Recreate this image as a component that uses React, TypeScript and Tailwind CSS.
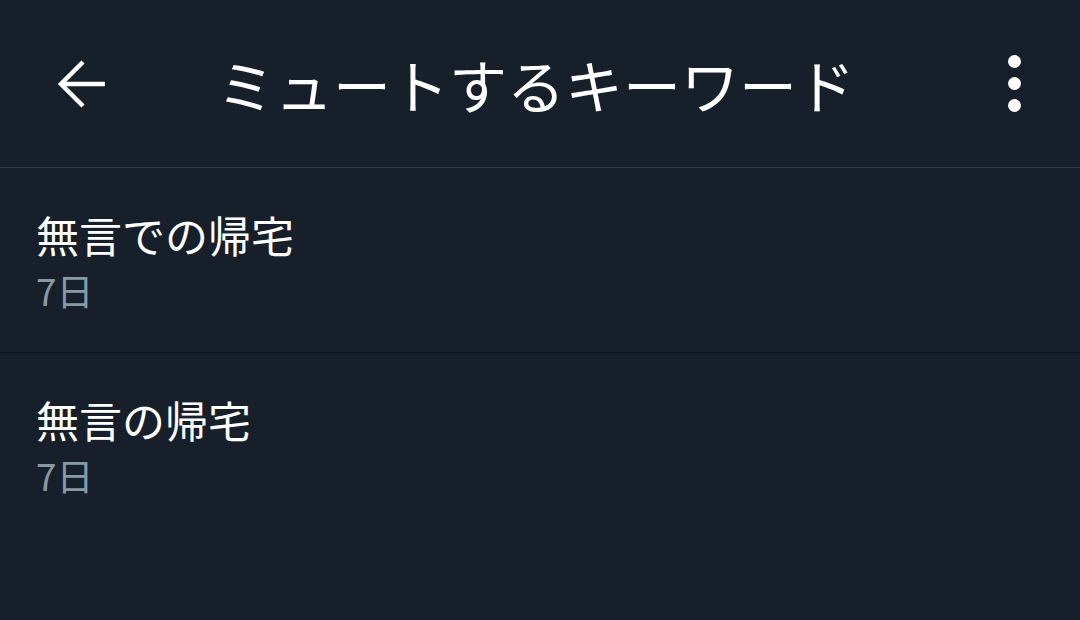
const keywords = [
  { word: "無言での帰宅", duration: "7日" },
  { word: "無言の帰宅", duration: "7日" },
];

function BackArrow() {
  return (
    <svg width="52" height="52" viewBox="0 0 52 52" fill="none" stroke="white" strokeWidth="4.5">
      <path d="M4 26 H48" />
      <path d="M26 4 L4 26 L26 48" strokeLinejoin="miter" />
    </svg>
  );
}

function MoreDots() {
  return (
    <div className="flex flex-col items-center gap-[9px]">
      <span className="h-[13px] w-[13px] rounded-full bg-white" />
      <span className="h-[13px] w-[13px] rounded-full bg-white" />
      <span className="h-[13px] w-[13px] rounded-full bg-white" />
    </div>
  );
}

export default function App() {
  return (
    <div
      className="h-[620px] w-[1080px] overflow-hidden bg-[#17202a] text-white"
      style={{ fontFamily: '"Noto Sans CJK JP", "Noto Sans", sans-serif' }}
    >
      <header className="flex h-[168px] items-center border-b border-[#2f3a44] pl-[57px] pr-[59px]">
        <BackArrow />
        <h1 className="ml-[108px] flex-1 text-[58px] leading-none">
          ミュートするキーワード
        </h1>
        <MoreDots />
      </header>
      <ul>
        {keywords.map((k, i) => (
          <li
            key={k.word}
            className={
              i < keywords.length - 1
                ? "h-[185px] border-b border-[#0f161d] pl-[36px] pt-[37px]"
                : "h-[185px] pl-[36px] pt-[37px]"
            }
          >
            <div className="text-[43px] leading-[58px]">{k.word}</div>
            <div className="text-[37px] leading-[54px] text-[#8899a6]">{k.duration}</div>
          </li>
        ))}
      </ul>
    </div>
  );
}
